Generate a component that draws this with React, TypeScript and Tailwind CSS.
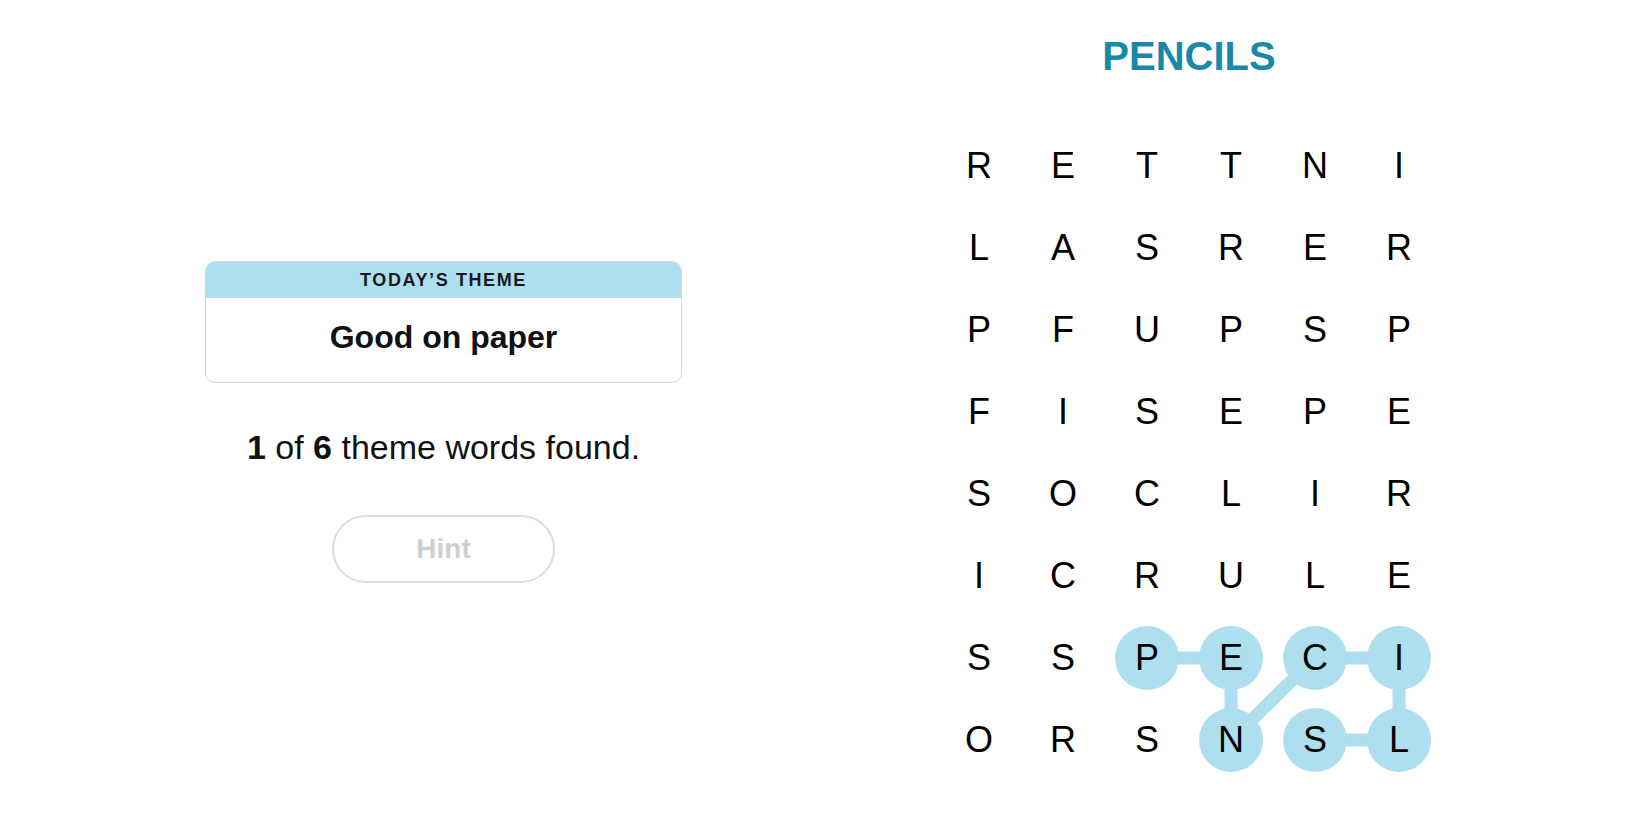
import React from "react";

const letters = [
  "RETTNI",
  "LASRER",
  "PFUPSP",
  "FISEPE",
  "SOCLIR",
  "ICRULE",
  "SSPECI",
  "ORSNSL",
];

// found word path: P E N C I L S  (row, col)
const path: [number, number][] = [
  [6, 2],
  [6, 3],
  [7, 3],
  [6, 4],
  [6, 5],
  [7, 5],
  [7, 4],
];

const CW = 84;
const RH = 82;
const cx = (c: number) => CW / 2 + c * CW;
const cy = (r: number) => RH / 2 + r * RH;

function Board() {
  return (
    <div className="relative w-[504px] h-[656px]">
      <svg className="absolute inset-0" width={504} height={656}>
        <polyline
          points={path.map(([r, c]) => `${cx(c)},${cy(r)}`).join(" ")}
          fill="none"
          stroke="#aedfee"
          strokeWidth={13}
          strokeLinejoin="round"
        />
        {path.map(([r, c], i) => (
          <circle key={i} cx={cx(c)} cy={cy(r)} r={32} fill="#aedfee" />
        ))}
      </svg>
      <div className="relative grid grid-cols-6">
        {letters.map((row, r) =>
          row.split("").map((ch, c) => (
            <div
              key={`${r}-${c}`}
              className="h-[82px] flex items-center justify-center text-[36px] text-black"
            >
              {ch}
            </div>
          ))
        )}
      </div>
    </div>
  );
}

export default function App() {
  return (
    <div
      className="w-[1650px] h-[825px] bg-white flex pl-[205px] gap-[255px]"
      style={{ fontFamily: '"Liberation Sans", Arial, sans-serif' }}
    >
      {/* LEFT */}
      <div className="w-[477px] pt-[261px] flex flex-col items-center">
        <div className="w-full h-[122px] rounded-[10px] border border-[#d6d6d6] overflow-hidden flex flex-col">
          <div className="h-[36px] bg-[#aedfee] flex items-center justify-center text-[18px] font-semibold tracking-[1.6px] text-[#1a1a1a]">
            TODAY’S THEME
          </div>
          <div className="flex-1 flex items-center justify-center text-[32px] font-bold text-[#111] pb-[6px]">
            Good on paper
          </div>
        </div>
        <p className="mt-[45px] text-[34px] leading-[38px] text-[#111]">
          <span className="font-bold">1</span> of{" "}
          <span className="font-bold">6</span> theme words found.
        </p>
        <button className="mt-[49px] w-[223px] h-[68px] rounded-full border-2 border-[#dcdcdc] text-[28px] font-bold text-[#cfcfcf] bg-white">
          Hint
        </button>
      </div>

      {/* RIGHT */}
      <div className="w-[504px] pt-[32px] flex flex-col items-center">
        <h1 className="h-[48px] leading-[48px] text-[40px] font-bold text-[#1a88a8]">
          PENCILS
        </h1>
        <div className="mt-[45px]">
          <Board />
        </div>
      </div>
    </div>
  );
}
